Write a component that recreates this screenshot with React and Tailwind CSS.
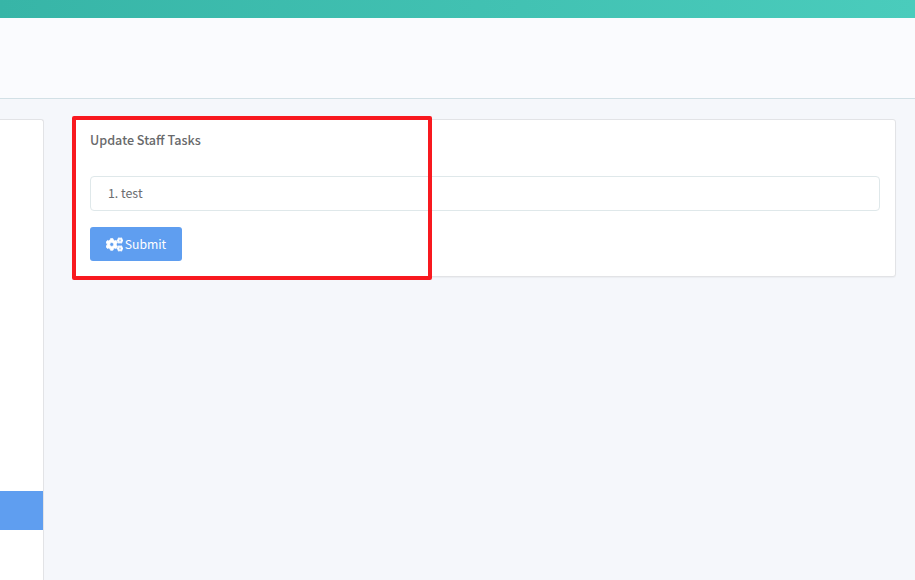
import React from "react";
import { FaCogs } from "react-icons/fa";

export default function App() {
  return (
    <div className="relative h-[580px] w-[915px] overflow-hidden bg-[#f5f7fb] font-['Noto_Sans_CJK_SC',sans-serif]">
      <div className="h-[18px] bg-gradient-to-r from-[#37b5a7] to-[#4accbc]" />
      <div className="h-[81px] border-b border-[#d2e0e6] bg-[#fafbfe]" />
      <div className="flex items-start pt-5">
        <div className="h-[470px] w-[44px] shrink-0 rounded-tr-[3px] border-r border-t border-[#e2e3e6] bg-white pt-[371px]">
          <div className="h-[39px] bg-[#5f9ef0]" />
        </div>
        <div className="ml-7 w-[824px] rounded-[3px] border border-[#e2e3e6] bg-white pb-[15px] pl-[17px] pr-[15px] pt-[10px] shadow-[0_1px_1px_rgba(0,0,0,0.04)]">
          <h2 className="text-[12.6px] font-medium leading-[20px] text-[#68696b]">Update Staff Tasks</h2>
          <div className="mt-[26px] flex h-[35px] items-center rounded-[4px] border border-[#dfe8ea] bg-white pl-[16px] text-[12.4px] text-[#6b6d70]">
            <ol className="list-decimal pl-[14px]">
              <li>test</li>
            </ol>
          </div>
          <button className="mt-[16px] flex h-[34px] w-[92px] items-center justify-center gap-[2px] rounded-[3px] bg-[#5f9ef0] text-[12.2px] font-normal text-white">
            <FaCogs className="text-[17px]" stroke="currentColor" strokeWidth={26} />
            <span>Submit</span>
          </button>
        </div>
      </div>
      <div className="absolute left-[72px] top-[116px] h-[164px] w-[360px] rounded-[2px] border-4 border-[#f8191f]" />
    </div>
  );
}
